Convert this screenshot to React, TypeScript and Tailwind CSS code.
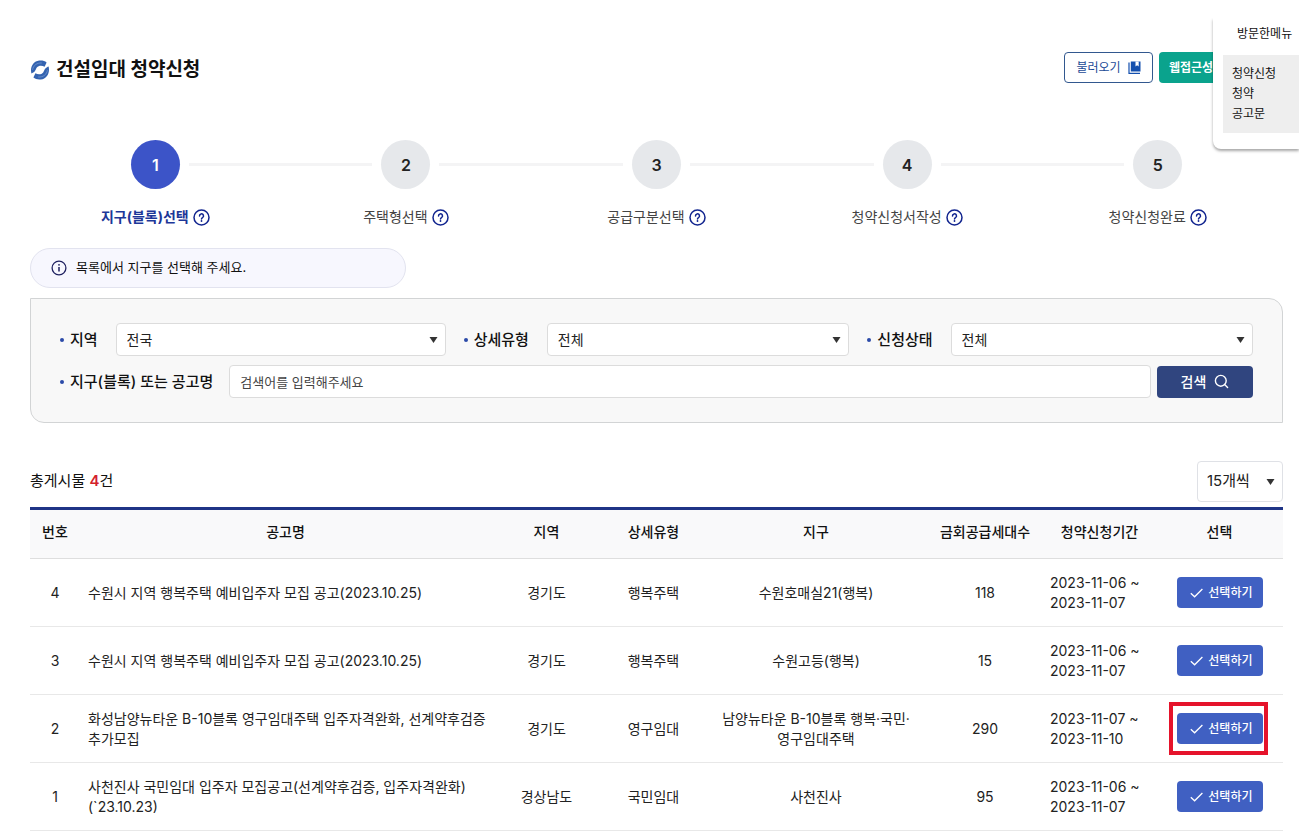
import React from "react";

const steps = [
  { label: "지구(블록)선택", active: true },
  { label: "주택형선택", active: false },
  { label: "공급구분선택", active: false },
  { label: "청약신청서작성", active: false },
  { label: "청약신청완료", active: false },
];

type Notice = {
  no: number;
  title: string[];
  region: string;
  type: string;
  district: string[];
  units: number;
  from: string;
  to: string;
  highlighted?: boolean;
};

const notices: Notice[] = [
  {
    no: 4,
    title: ["수원시 지역 행복주택 예비입주자 모집 공고(2023.10.25)"],
    region: "경기도",
    type: "행복주택",
    district: ["수원호매실21(행복)"],
    units: 118,
    from: "2023-11-06",
    to: "2023-11-07",
  },
  {
    no: 3,
    title: ["수원시 지역 행복주택 예비입주자 모집 공고(2023.10.25)"],
    region: "경기도",
    type: "행복주택",
    district: ["수원고등(행복)"],
    units: 15,
    from: "2023-11-06",
    to: "2023-11-07",
  },
  {
    no: 2,
    title: ["화성남양뉴타운 B-10블록 영구임대주택 입주자격완화, 선계약후검증", "추가모집"],
    region: "경기도",
    type: "영구임대",
    district: ["남양뉴타운 B-10블록 행복·국민·", "영구임대주택"],
    units: 290,
    from: "2023-11-07",
    to: "2023-11-10",
    highlighted: true,
  },
  {
    no: 1,
    title: ["사천진사 국민임대 입주자 모집공고(선계약후검증, 입주자격완화)", "(`23.10.23)"],
    region: "경상남도",
    type: "국민임대",
    district: ["사천진사"],
    units: 95,
    from: "2023-11-06",
    to: "2023-11-07",
  },
];

function Lines({ lines }: { lines: string[] }) {
  return (
    <>
      {lines.map((line) => (
        <span key={line} className="block whitespace-nowrap">
          {line}
        </span>
      ))}
    </>
  );
}

function Logo() {
  return (
    <svg viewBox="0 0 20 20" className="size-5 shrink-0" aria-hidden="true">
      <path
        d="M1.400 13.400C-0.200 7.200 3.200 1.200 9.200 0.500c3-.3 5.600.3 7.400 1.900L14.600 6.800C11.800 5 8.600 5.400 6.800 7.600 5.800 9 5.800 10 4.800 11.200 4 12.200 2.600 13 1.400 13.400Z"
        fill="#3463b0"
      />
      <path
        d="M18.600 6.600C20.200 12.800 16.800 18.800 10.800 19.500c-3 .3-5.600-.3-7.400-1.900L5.400 13.200C8.200 15 11.400 14.600 13.200 12.400c1-1.400 1-2.400 2-3.600C16 7.800 17.400 7 18.600 6.600Z"
        fill="#3463b0"
      />
      <path
        d="M2.600 9.800C3.200 5.600 6.800 2.600 11.800 3M17.400 10.200C16.800 14.400 13.200 17.400 8.200 17"
        fill="none"
        stroke="#7b9dd6"
        strokeWidth="0.700"
      />
    </svg>
  );
}

function HelpIcon() {
  return (
    <svg viewBox="0 0 17 17" className="size-[17px]" fill="none" stroke="#12258f" strokeWidth="1.500" aria-hidden="true">
      <circle cx="8.500" cy="8.500" r="7.500" />
      <path d="M6.500 7a2 2 0 1 1 3 1.600c-.7.400-1 .7-1 1.500" strokeLinecap="round" />
      <circle cx="8.500" cy="12" r="0.900" fill="#12258f" stroke="none" />
    </svg>
  );
}

function InfoIcon() {
  return (
    <svg viewBox="0 0 16 16" className="size-4 shrink-0" fill="none" stroke="#1f2160" strokeWidth="1.300" aria-hidden="true">
      <circle cx="8" cy="8" r="6.900" />
      <path d="M8 7v4.500" strokeWidth="1.500" />
      <circle cx="8" cy="4.800" r="0.900" fill="#1f2160" stroke="none" />
    </svg>
  );
}

function BookIcon() {
  return (
    <svg viewBox="0 0 13 13" className="size-[13px]" aria-hidden="true">
      <path d="M2.800 0.500h9.700v10H2.800z" fill="#134fae" />
      <path d="M7.500 0.500h3.200v5L9.100 4.300 7.500 5.500z" fill="#ffffff" />
      <path d="M1 1.500v10.800h11" fill="none" stroke="#134fae" strokeWidth="1.200" />
    </svg>
  );
}

function CheckIcon() {
  return (
    <svg viewBox="0 0 13 10" className="h-[10px] w-[13px]" fill="none" stroke="#ffffff" strokeWidth="1.300" aria-hidden="true">
      <path d="M0.800 5.200 4.600 8.800 12.400 1" />
    </svg>
  );
}

function SearchIcon() {
  return (
    <svg viewBox="0 0 15 15" className="size-[15px]" fill="none" stroke="#ffffff" strokeWidth="1.400" aria-hidden="true">
      <circle cx="6.800" cy="6.800" r="5.400" />
      <path d="M10.600 10.600 13.600 13.600" strokeLinecap="round" />
    </svg>
  );
}

function Arrow() {
  return (
    <svg
      viewBox="0 0 9 7"
      className="pointer-events-none absolute top-1/2 right-2 h-[7px] w-[9px] -translate-y-1/2"
      aria-hidden="true"
    >
      <path d="M0.500 0.500h8L4.500 6.500z" fill="#333333" />
    </svg>
  );
}

function FilterLabel({ htmlFor, children }: { htmlFor: string; children: React.ReactNode }) {
  return (
    <label htmlFor={htmlFor} className="flex shrink-0 items-center gap-1.5 text-[15px] leading-5 font-medium text-[#111]">
      <span className="size-1 rounded-full bg-[#2b4aa8]" />
      {children}
    </label>
  );
}

function FilterSelect({ id, label, value }: { id: string; label: string; value: string }) {
  return (
    <div className="flex items-center gap-[18px]">
      <FilterLabel htmlFor={id}>{label}</FilterLabel>
      <div className="relative min-w-0 flex-1">
        <select
          id={id}
          className="block h-[33px] w-full appearance-none rounded border border-[#dcdcdc] bg-white px-2.5 text-sm text-[#222]"
        >
          <option>{value}</option>
        </select>
        <Arrow />
      </div>
    </div>
  );
}

export default function App() {
  return (
    <div className="relative bg-white pr-[27px] pb-2 pl-[30px] font-['Inter','Noto_Sans_CJK_KR',sans-serif] text-[#222]">
      <header className="flex items-start justify-between pt-[52px]">
        <h1 className="flex items-center gap-1.5 text-[19px] leading-9 font-bold text-[#111]">
          <Logo />
          건설임대 청약신청
        </h1>
        <div className="flex gap-1.5 text-xs">
          <button
            type="button"
            className="flex h-[31px] w-[89px] items-center justify-center gap-[7px] rounded border border-[#32588f] bg-white text-[#1b4a96]"
          >
            불러오기
            <BookIcon />
          </button>
          <button
            type="button"
            className="h-[31px] w-[124px] rounded bg-[#0aa38d] px-2.5 text-left font-bold text-white"
          >
            웹접근성
          </button>
        </div>
      </header>

      <aside className="absolute top-[18px] right-[11px] overflow-hidden pb-2 pl-2">
        <div className="w-[86px] rounded-bl-lg bg-white pt-1.5 pb-4 pl-[10px] text-xs text-[#111] shadow-[0_2px_3px_rgba(0,0,0,0.35)]">
          <h2 className="pl-[14px] leading-[19px] whitespace-nowrap">방문한메뉴</h2>
          <ul className="mt-3 bg-[#eeeeee] py-[9px] pl-[9px] leading-5">
            <li><a href="#apply">청약신청</a></li>
            <li><a href="#subscription">청약</a></li>
            <li><a href="#notice">공고문</a></li>
          </ul>
        </div>
      </aside>

      <ol className="mt-[52px] grid grid-cols-5">
        {steps.map((step, i) => (
          <li key={step.label}>
            <div className="flex items-center gap-[9px]">
              <span className={i === 0 ? "h-[3px] flex-1" : "h-[3px] flex-1 bg-[#f4f4f5]"} />
              <span
                className={
                  step.active
                    ? "flex size-[49px] items-center justify-center rounded-full bg-[#3c54c8] text-base font-semibold text-white"
                    : "flex size-[49px] items-center justify-center rounded-full bg-[#e6e8eb] text-base font-semibold text-[#222]"
                }
              >
                {i + 1}
              </span>
              <span className={i === steps.length - 1 ? "h-[3px] flex-1" : "h-[3px] flex-1 bg-[#f4f4f5]"} />
            </div>
            <div className="mt-[18px] flex h-5 items-center justify-center gap-1 text-sm">
              <span className={step.active ? "font-bold text-[#1d3798]" : "text-[#444]"}>{step.label}</span>
              <button type="button" aria-label={`${step.label} 도움말`}>
                <HelpIcon />
              </button>
            </div>
          </li>
        ))}
      </ol>

      <p className="mt-[21px] flex h-10 w-[376px] items-center gap-[9px] rounded-full border border-[#e2e3ef] bg-[#f7f7fe] pl-5 text-[13px] text-[#111]">
        <InfoIcon />
        목록에서 지구를 선택해 주세요.
      </p>

      <form
        className="mt-2.5 flex flex-col gap-[9px] rounded-tr-[14px] rounded-bl-[14px] border border-[#d2d4d5] bg-[#f8f8f8] px-[29px] pt-6 pb-6"
        onSubmit={(e) => e.preventDefault()}
      >
        <div className="grid grid-cols-3 gap-[18px]">
          <FilterSelect id="region" label="지역" value="전국" />
          <FilterSelect id="detail-type" label="상세유형" value="전체" />
          <FilterSelect id="status" label="신청상태" value="전체" />
        </div>
        <div className="flex items-center gap-4">
          <FilterLabel htmlFor="keyword">지구(블록) 또는 공고명</FilterLabel>
          <div className="flex flex-1 items-center gap-1.5">
            <input
              id="keyword"
              type="text"
              placeholder="검색어를 입력해주세요"
              className="h-[33px] min-w-0 flex-1 rounded border border-[#dcdcdc] bg-white px-2.5 text-[13px] placeholder:text-[#444]"
            />
            <button
              type="submit"
              className="flex h-8 w-24 items-center justify-center gap-2 rounded bg-[#30457f] text-sm font-medium text-white"
            >
              검색
              <SearchIcon />
            </button>
          </div>
        </div>
      </form>

      <div className="mt-[38px] flex items-center justify-between">
        <p className="text-[15px] text-[#111]">
          총게시물 <strong className="font-semibold text-[#d3212b]">4</strong>건
        </p>
        <div className="relative w-[86px]">
          <select
            aria-label="페이지당 게시물 수"
            className="block h-[41px] w-full appearance-none rounded border border-[#dfe1e6] bg-white px-[9px] text-[15px] text-[#222]"
          >
            <option>15개씩</option>
          </select>
          <Arrow />
        </div>
      </div>

      <table className="mt-[5px] w-full table-fixed border-collapse border-t-3 border-[#1f3486] text-sm leading-5">
        <colgroup>
          <col className="w-[50px]" />
          <col />
          <col className="w-[111px]" />
          <col className="w-[103px]" />
          <col className="w-[222px]" />
          <col className="w-[116px]" />
          <col className="w-[113px]" />
          <col className="w-[127px]" />
        </colgroup>
        <thead>
          <tr className="h-[50px] border-b border-[#dedede] bg-[#f9f9fa] text-[#111]">
            {["번호", "공고명", "지역", "상세유형", "지구", "금회공급세대수", "청약신청기간", "선택"].map((name) => (
              <th key={name} scope="col" className="pb-1 font-medium whitespace-nowrap">
                {name}
              </th>
            ))}
          </tr>
        </thead>
        <tbody>
          {notices.map((n) => (
            <tr key={n.no} className="h-[68px] border-b border-[#e8e8e8] text-center">
              <td>{n.no}</td>
              <td className="pl-2 text-left">
                <Lines lines={n.title} />
              </td>
              <td>{n.region}</td>
              <td>{n.type}</td>
              <td>
                <Lines lines={n.district} />
              </td>
              <td>{n.units}</td>
              <td className="pl-[7px] text-left">
                <Lines lines={[`${n.from} ~`, n.to]} />
              </td>
              <td>
                <div className="relative mx-auto h-[31px] w-[86px]">
                  <button
                    type="button"
                    className="flex size-full items-center justify-end gap-[5px] rounded bg-[#4060c2] pr-2.5 text-xs font-medium text-white"
                  >
                    <CheckIcon />
                    선택하기
                  </button>
                  {n.highlighted && (
                    <span className="pointer-events-none absolute -inset-y-[11px] -right-[5px] -left-2 border-4 border-[#e5132b]" />
                  )}
                </div>
              </td>
            </tr>
          ))}
        </tbody>
      </table>
    </div>
  );
}
